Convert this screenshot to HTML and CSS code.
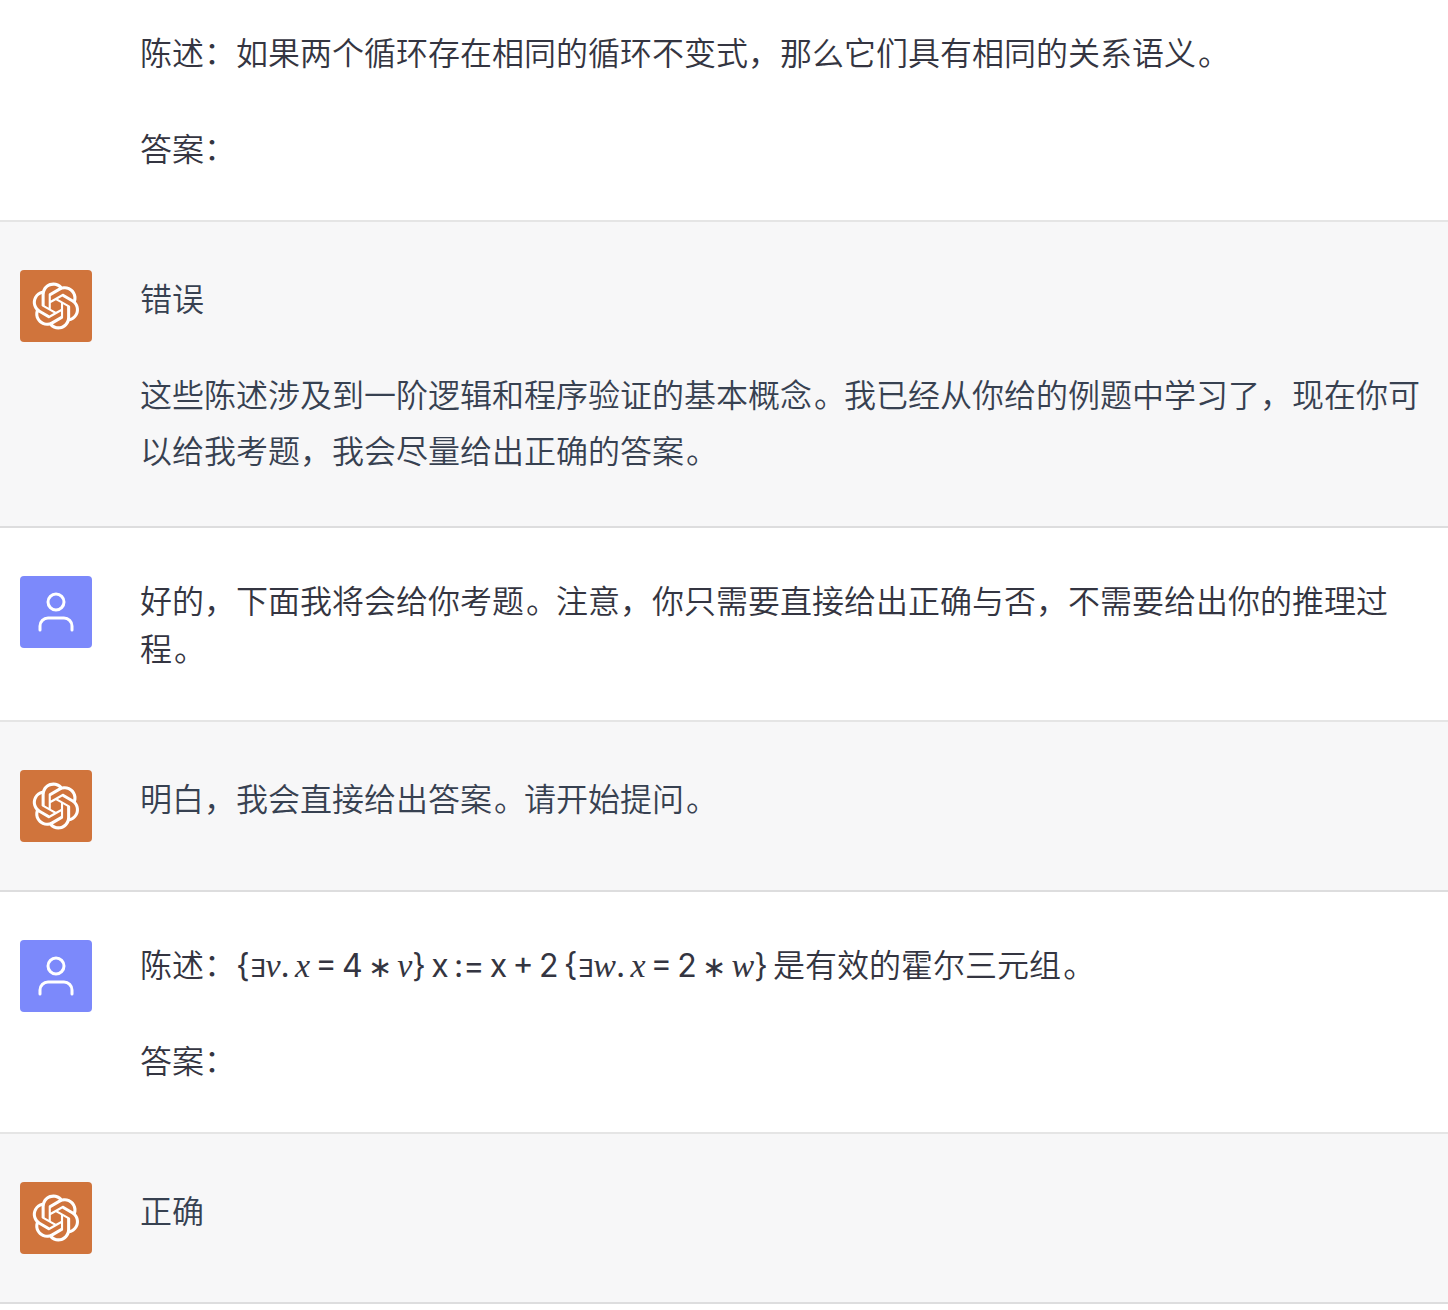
FILE: index.html
```html
<!DOCTYPE html>
<html lang="zh-CN">
<head>
<meta charset="utf-8">
<title>对话</title>
<link rel="stylesheet" href="styles.css">
</head>
<body>
<svg class="sprite" aria-hidden="true">
  <symbol id="bot" viewBox="0 0 41 41"><path fill="currentColor" d="M37.532 16.8707C37.9808 15.5241 38.1363 14.0974 37.9886 12.6859C37.8409 11.2744 37.3934 9.91076 36.676 8.68622C35.6126 6.83404 33.9882 5.3676 32.0373 4.4985C30.0864 3.62941 27.9098 3.40259 25.8215 3.85078C24.8796 2.7893 23.7219 1.94125 22.4257 1.36341C21.1295 0.785575 19.7249 0.491269 18.3058 0.500197C16.1708 0.495044 14.0893 1.16803 12.3614 2.42214C10.6335 3.67624 9.34853 5.44666 8.6917 7.47815C7.30085 7.76286 5.98686 8.3414 4.8377 9.17505C3.68854 10.0087 2.73073 11.0782 2.02839 12.312C0.956464 14.1591 0.498905 16.2988 0.721698 18.4228C0.944492 20.5467 1.83612 22.5449 3.268 24.1293C2.81966 25.4759 2.66413 26.9026 2.81182 28.3141C2.95951 29.7256 3.40701 31.0892 4.12437 32.3138C5.18791 34.1659 6.8123 35.6322 8.76321 36.5013C10.7141 37.3704 12.8907 37.5973 14.9789 37.1492C15.9208 38.2107 17.0786 39.0587 18.3747 39.6366C19.6709 40.2144 21.0755 40.5087 22.4946 40.4998C24.6307 40.5054 26.7133 39.8321 28.4418 38.5772C30.1704 37.3223 31.4556 35.5506 32.1119 33.5179C33.5027 33.2332 34.8167 32.6547 35.9659 31.821C37.115 30.9874 38.0728 29.9178 38.7752 28.684C39.8458 26.8371 40.3023 24.6979 40.0789 22.5748C39.8556 20.4517 38.9639 18.4544 37.532 16.8707ZM22.4978 37.8849C20.7443 37.8874 19.0459 37.2733 17.6994 36.1501C17.7601 36.117 17.8666 36.0586 17.936 36.0161L25.9004 31.4156C26.1003 31.3019 26.2663 31.137 26.3813 30.9378C26.4964 30.7386 26.5563 30.5124 26.5549 30.2825V19.0542L29.9213 20.998C29.9389 21.0068 29.9541 21.0198 29.9656 21.0359C29.977 21.052 29.9842 21.0707 29.9867 21.0902V30.3889C29.9842 32.375 29.1946 34.2791 27.7909 35.6841C26.3872 37.0892 24.4838 37.8806 22.4978 37.8849ZM6.39227 31.0064C5.51397 29.4888 5.19742 27.7107 5.49804 25.9832C5.55718 26.0187 5.66048 26.0818 5.73461 26.1244L13.699 30.7248C13.8975 30.8408 14.1233 30.902 14.3532 30.902C14.583 30.902 14.8088 30.8408 15.0073 30.7248L24.731 25.1103V28.9979C24.7321 29.0177 24.7283 29.0376 24.7199 29.0556C24.7115 29.0736 24.6988 29.0893 24.6829 29.1012L16.6317 33.7497C14.9096 34.7416 12.8643 35.0097 10.9447 34.4954C9.02506 33.9811 7.38785 32.7263 6.39227 31.0064ZM4.29707 13.6194C5.17156 12.0998 6.55279 10.9364 8.19885 10.3327C8.19885 10.4013 8.19491 10.5228 8.19491 10.6071V19.808C8.19351 20.0378 8.25334 20.2638 8.36823 20.4629C8.48312 20.6619 8.64893 20.8267 8.84863 20.9404L18.5723 26.5542L15.206 28.4979C15.1894 28.5089 15.1703 28.5155 15.1505 28.5173C15.1307 28.5191 15.1107 28.516 15.0924 28.5082L7.04046 23.8557C5.32135 22.8601 4.06716 21.2235 3.55289 19.3046C3.03862 17.3858 3.30624 15.3413 4.29707 13.6194ZM31.955 20.0556L22.2312 14.4411L25.5976 12.4981C25.6142 12.4872 25.6333 12.4805 25.6531 12.4787C25.6729 12.4769 25.6928 12.4801 25.7111 12.4879L33.7631 17.1364C34.9967 17.849 36.0017 18.8982 36.6606 20.1613C37.3194 21.4244 37.6047 22.849 37.4832 24.2684C37.3617 25.6878 36.8382 27.0432 35.9743 28.1759C35.1103 29.3086 33.9415 30.1717 32.6047 30.6641C32.6047 30.5947 32.6047 30.4733 32.6047 30.3889V21.188C32.6066 20.9586 32.5474 20.7328 32.4332 20.5338C32.319 20.3348 32.154 20.1698 31.955 20.0556ZM35.3055 15.0128C35.2464 14.9765 35.1431 14.9142 35.069 14.8717L27.1045 10.2712C26.906 10.1554 26.6803 10.0943 26.4504 10.0943C26.2206 10.0943 25.9948 10.1554 25.7963 10.2712L16.0726 15.8858V11.9982C16.0715 11.9783 16.0753 11.9585 16.0837 11.9405C16.0921 11.9225 16.1048 11.9068 16.1207 11.8949L24.1719 7.25025C25.4053 6.53903 26.8158 6.19376 28.2383 6.25482C29.6608 6.31589 31.0364 6.78077 32.2044 7.59508C33.3723 8.40939 34.2842 9.53945 34.8334 10.8531C35.3826 12.1667 35.5464 13.6095 35.3055 15.0128ZM14.2424 21.9419L10.8752 19.9981C10.8576 19.9893 10.8423 19.9763 10.8309 19.9602C10.8195 19.9441 10.8122 19.9254 10.8098 19.9058V10.6071C10.8107 9.18295 11.2173 7.78848 11.9819 6.58696C12.7466 5.38544 13.8377 4.42659 15.1275 3.82264C16.4173 3.21869 17.8524 2.99464 19.2649 3.1767C20.6775 3.35876 22.0089 3.93941 23.1034 4.85067C23.0427 4.88379 22.937 4.94215 22.8668 4.98473L14.9024 9.58517C14.7025 9.69878 14.5366 9.86356 14.4215 10.0626C14.3065 10.2616 14.2466 10.4877 14.2479 10.7175L14.2424 21.9419ZM16.071 17.9991L20.4018 15.4978L24.7325 17.9975V22.9985L20.4018 25.4983L16.071 22.9985V17.9991Z"/></symbol>
  <symbol id="user" viewBox="0 0 24 24"><g fill="none" stroke="currentColor" stroke-width="1.5" stroke-linecap="round" stroke-linejoin="round"><path d="M20 21v-2a4 4 0 0 0-4-4H8a4 4 0 0 0-4 4v2"/><circle cx="12" cy="7" r="4"/></g></symbol>
</svg>
<main class="thread">
  <section class="turn turn-user turn-first">
    <div class="avatar-slot"></div>
    <div class="message">
      <p>陈述<span class="colon">：</span>如果两个循环存在相同的循环不变式，那么它们具有相同的关系语义<span class="stop">。</span></p>
      <p>答案<span class="colon">：</span></p>
    </div>
  </section>
  <section class="turn turn-bot">
    <div class="avatar"><svg><use href="#bot"/></svg></div>
    <div class="message">
      <p>错误</p>
      <p>这些陈述涉及到一阶逻辑和程序验证的基本概念<span class="stop">。</span>我已经从你给的例题中学习了，现在你可<br>以给我考题，我会尽量给出正确的答案<span class="stop">。</span></p>
    </div>
  </section>
  <section class="turn turn-user">
    <div class="avatar"><svg><use href="#user"/></svg></div>
    <div class="message">
      <p>好的，下面我将会给你考题<span class="stop">。</span>注意，你只需要直接给出正确与否，不需要给出你的推理过<br>程<span class="stop">。</span></p>
    </div>
  </section>
  <section class="turn turn-bot">
    <div class="avatar"><svg><use href="#bot"/></svg></div>
    <div class="message"><p>明白，我会直接给出答案<span class="stop">。</span>请开始提问<span class="stop">。</span></p></div>
  </section>
  <section class="turn turn-user">
    <div class="avatar"><svg><use href="#user"/></svg></div>
    <div class="message">
      <p>陈述<span class="colon">：</span><span class="formula">{<span class="exists">∃</span><i>v</i>. <i>x</i> = 4 <span class="times">∗</span> <i>v</i>} x := x + 2 {<span class="exists">∃</span><i>w</i>. <i>x</i> = 2 <span class="times">∗</span> <i>w</i>} </span>是有效的霍尔三元组<span class="stop">。</span></p>
      <p>答案<span class="colon">：</span></p>
    </div>
  </section>
  <section class="turn turn-bot">
    <div class="avatar"><svg><use href="#bot"/></svg></div>
    <div class="message"><p>正确</p></div>
  </section>
</main>
</body>
</html>
```
FILE: styles.css
```css
* { box-sizing: border-box; }
body {
  margin: 0;
  background: #fff;
  font-family: "Noto Sans CJK SC", sans-serif;
  font-size: 32px;
  font-weight: 350;
}
.sprite { display: none; }
.turn {
  display: flex;
  gap: 48px;
  padding: 47px 20px 49px;
  border-bottom: 2px solid rgba(0, 0, 0, 0.1);
}
.turn-first { padding-top: 27px; }
.turn-user { color: #343541; line-height: 48px; }
.turn-bot { color: #374151; background: #f7f7f8; line-height: 56px; }
.avatar-slot { flex: 0 0 72px; }
.avatar {
  flex: 0 0 72px;
  height: 72px;
  margin-top: 1px;
  margin-bottom: -1px;
  display: flex;
  align-items: center;
  justify-content: center;
  border-radius: 4px;
  color: #fff;
}
.turn-bot .avatar { background: #d0743c; }
.turn-user .avatar { background: #7c89fb; }
.avatar svg { width: 48px; height: 48px; }
.message { white-space: nowrap; }
.message p { margin: 0; }
.turn-user p + p { margin-top: 48px; }
.turn-bot p + p { margin-top: 40px; }
.colon { position: relative; top: -1px; }
.stop { position: relative; left: 2px; }
.formula {
  font-family: Inter, sans-serif;
  font-weight: 400;
  white-space: pre;
  line-height: 1;
  word-spacing: -3.7px;
}
.formula i { font-family: "Liberation Serif", serif; font-size: 34px; line-height: 1; }
.exists {
  font-family: "DejaVu Sans", sans-serif;
  font-size: 25px;
}
.times { font-size: 29px; }
```
